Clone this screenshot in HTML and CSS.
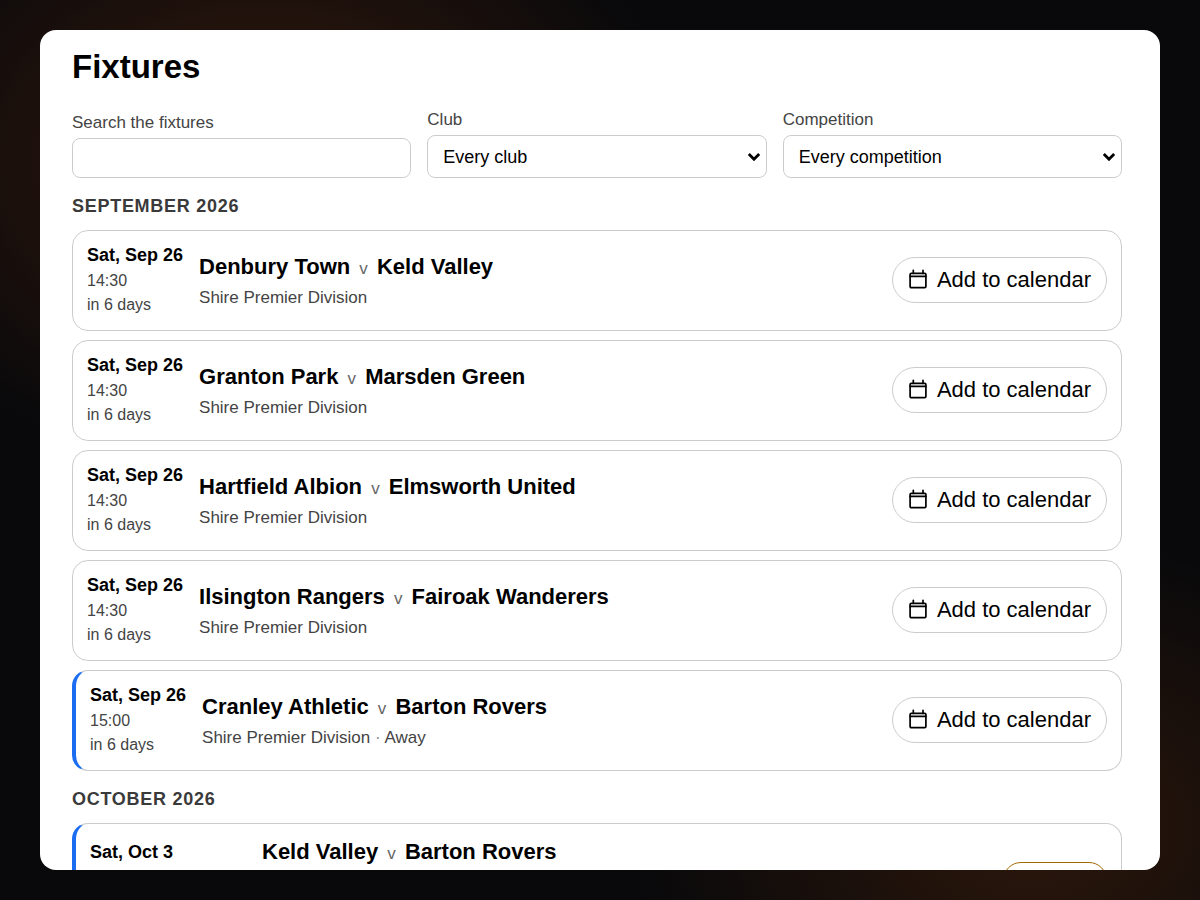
FILE: index.html
```html
<!DOCTYPE html>
<html lang="en">
<head>
  <meta charset="UTF-8" />
  <title>Fixtures</title>
  <meta name="viewport" content="width=device-width, initial-scale=1.0" />
  <link rel="stylesheet" href="styles.css">
</head>
<body>

  <svg class="sprite" aria-hidden="true">
    <symbol id="icon-calendar" viewBox="0 0 21 21">
      <rect x="2.1" y="4.4" width="15.8" height="14.3" rx="1.2" />
      <path d="M2.1 7.4h15.8M5.3 1.3v3M15 1.3v3" />
    </symbol>
  </svg>

  <main class="panel">
    <h1 class="page-title">Fixtures</h1>

    <form class="filters">
      <div class="field">
        <label for="search">Search the fixtures</label>
        <input type="search" id="search" name="search" />
      </div>
      <div class="field">
        <label for="club">Club</label>
        <select id="club" name="club">
          <option>Every club</option>
        </select>
      </div>
      <div class="field">
        <label for="competition">Competition</label>
        <select id="competition" name="competition">
          <option>Every competition</option>
        </select>
      </div>
    </form>

    <section>
      <h2 class="month">September 2026</h2>
      <ul class="fixture-list">
        <li class="fixture">
          <div class="when">
            <strong>Sat, Sep 26</strong>
            <span>14:30</span>
            <span>in 6 days</span>
          </div>
          <div class="match">
            <p class="teams">Denbury Town <span class="versus">v</span> Keld Valley</p>
            <p class="competition">Shire Premier Division</p>
          </div>
          <button type="button" class="calendar-button"><svg class="icon" aria-hidden="true"><use href="#icon-calendar" /></svg>Add to calendar</button>
        </li>
        <li class="fixture">
          <div class="when">
            <strong>Sat, Sep 26</strong>
            <span>14:30</span>
            <span>in 6 days</span>
          </div>
          <div class="match">
            <p class="teams">Granton Park <span class="versus">v</span> Marsden Green</p>
            <p class="competition">Shire Premier Division</p>
          </div>
          <button type="button" class="calendar-button"><svg class="icon" aria-hidden="true"><use href="#icon-calendar" /></svg>Add to calendar</button>
        </li>
        <li class="fixture">
          <div class="when">
            <strong>Sat, Sep 26</strong>
            <span>14:30</span>
            <span>in 6 days</span>
          </div>
          <div class="match">
            <p class="teams">Hartfield Albion <span class="versus">v</span> Elmsworth United</p>
            <p class="competition">Shire Premier Division</p>
          </div>
          <button type="button" class="calendar-button"><svg class="icon" aria-hidden="true"><use href="#icon-calendar" /></svg>Add to calendar</button>
        </li>
        <li class="fixture">
          <div class="when">
            <strong>Sat, Sep 26</strong>
            <span>14:30</span>
            <span>in 6 days</span>
          </div>
          <div class="match">
            <p class="teams">Ilsington Rangers <span class="versus">v</span> Fairoak Wanderers</p>
            <p class="competition">Shire Premier Division</p>
          </div>
          <button type="button" class="calendar-button"><svg class="icon" aria-hidden="true"><use href="#icon-calendar" /></svg>Add to calendar</button>
        </li>
        <li class="fixture ours">
          <div class="when">
            <strong>Sat, Sep 26</strong>
            <span>15:00</span>
            <span>in 6 days</span>
          </div>
          <div class="match">
            <p class="teams">Cranley Athletic <span class="versus">v</span> Barton Rovers</p>
            <p class="competition">Shire Premier Division <span class="dot">·</span> Away</p>
          </div>
          <button type="button" class="calendar-button"><svg class="icon" aria-hidden="true"><use href="#icon-calendar" /></svg>Add to calendar</button>
        </li>
      </ul>
    </section>

    <section>
      <h2 class="month">October 2026</h2>
      <ul class="fixture-list">
        <li class="fixture ours postponed">
          <div class="when">
            <strong>Sat, Oct 3</strong>
          </div>
          <div class="match">
            <p class="teams">Keld Valley <span class="versus">v</span> Barton Rovers</p>
          </div>
          <span class="status"></span>
        </li>
      </ul>
    </section>
  </main>

</body>
</html>
```

FILE: styles.css
```css
* {
  box-sizing: border-box;
}

body {
  margin: 0;
  height: 100vh;
  padding: 30px 40px;
  font-family: "Liberation Sans", Arial, sans-serif;
  color: #000;
  background:
    radial-gradient(420px 310px at 22% 18%, #361a0d 0, transparent 100%),
    radial-gradient(400px 290px at 86% 92%, #2c170b 0, transparent 100%),
    #09090b;
}

.sprite {
  display: none;
}

.panel {
  height: 100%;
  padding: 17px 38px 0 32px;
  overflow: hidden;
  background: #fff;
  border-radius: 16px;
}

.page-title {
  margin: 0 0 23px;
  font-size: 33px;
  line-height: 40px;
}

.filters {
  display: grid;
  grid-template-columns: repeat(3, 1fr);
  align-items: end;
  gap: 16px;
}

.field {
  display: flex;
  flex-direction: column;
  gap: 5px;
}

.field label {
  font-size: 17px;
  line-height: 20px;
  color: #444;
}

.field input,
.field select {
  width: 100%;
  height: 43px;
  padding: 0 15px;
  font-family: inherit;
  font-size: 18px;
  color: #000;
  background: #fff;
  border: 1px solid #ccc;
  border-radius: 8px;
}

.field input {
  height: 40px;
}

.field select {
  appearance: none;
  background: #fff url("data:image/svg+xml,%3Csvg xmlns='http://www.w3.org/2000/svg' width='14' height='10' viewBox='0 0 14 10'%3E%3Cpath d='M1.8 2 7 7.2 12.2 2' fill='none' stroke='%23000' stroke-width='2.8'/%3E%3C/svg%3E") no-repeat right 5px center;
}

.month {
  margin: 18px 0 14px;
  font-size: 18px;
  line-height: 20px;
  letter-spacing: 0.04em;
  text-transform: uppercase;
  color: #3a3a3a;
}

.fixture-list {
  display: grid;
  gap: 9px;
  margin: 0;
  padding: 0;
  list-style: none;
}

.fixture {
  display: flex;
  align-items: center;
  gap: 16px;
  padding: 11px 14px 13px;
  border: 1px solid #ccc;
  border-radius: 16px;
}

.fixture.ours {
  border-left: 4px solid #1a6cf0;
}

.when {
  display: flex;
  flex-direction: column;
  font-size: 16px;
  line-height: 24px;
  color: #444;
}

.when strong {
  font-size: 18px;
  line-height: 27px;
  color: #000;
}

.match {
  flex: 1;
}

.match p {
  margin: 0;
}

.teams {
  font-size: 22px;
  line-height: 34px;
  font-weight: bold;
}

.versus {
  margin: 0 3px;
  font-size: 17px;
  font-weight: normal;
  color: #666;
}

.match .competition {
  font-size: 17px;
  line-height: 23px;
  color: #444;
}

.dot {
  color: #888;
}

.calendar-button {
  display: flex;
  align-items: center;
  gap: 8px;
  padding: 9px 15px;
  font-family: inherit;
  font-size: 22px;
  line-height: 26px;
  color: #000;
  background: #fff;
  border: 1px solid #ccc;
  border-radius: 23px;
  cursor: pointer;
}

.icon {
  width: 21px;
  height: 21px;
  fill: none;
  stroke: currentColor;
  stroke-width: 1.7;
  stroke-linecap: round;
}

.postponed {
  align-items: flex-start;
}

.postponed .when {
  width: 156px;
  padding-top: 4px;
}

.status {
  align-self: flex-end;
  width: 104px;
  height: 36px;
  margin-top: 27px;
  border: 1px solid #a16800;
  border-radius: 18px;
}
```
